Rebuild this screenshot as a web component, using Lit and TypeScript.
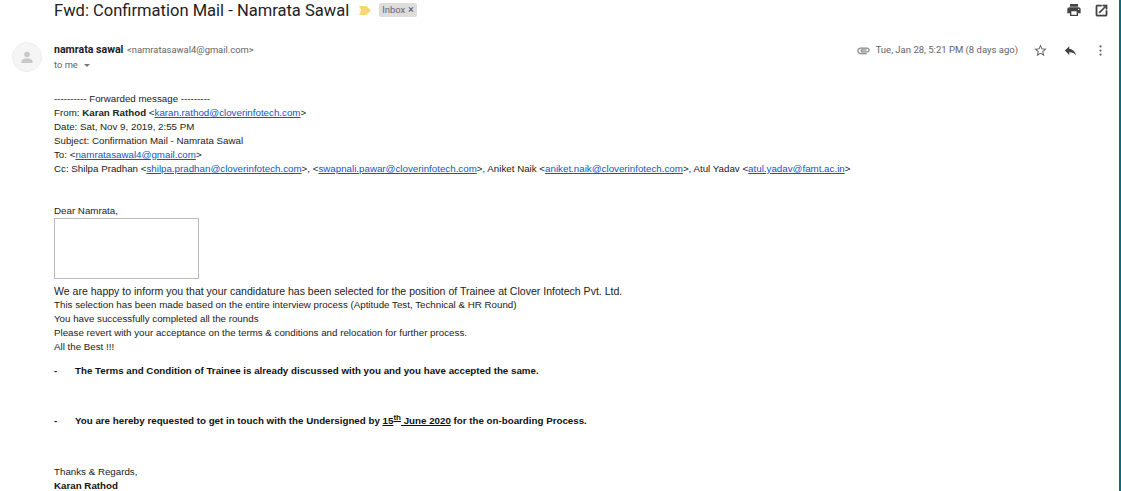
import { LitElement, html, css } from 'lit';
import { customElement } from 'lit/decorators.js';

@customElement('app-root')
export class AppRoot extends LitElement {
    static styles = css`
        :host {
            display: block;
            height: 491px;
            overflow: hidden;
            background: #fff;
            color: #222;
            font: 9.76px/14px 'Liberation Sans', Arial, sans-serif;
        }

        .page {
            height: 491px;
            box-sizing: border-box;
            border-right: 2px solid #0b6a7c;
            padding-right: 9px;
        }

        .subject {
            display: flex;
            align-items: center;
            height: 20px;
            padding-left: 54px;
        }

        .title {
            margin-top: 1px;
            font: 400 16.55px/20px Roboto, sans-serif;
            color: #222;
            white-space: nowrap;
        }

        .marker {
            margin-left: 10px;
        }

        .label {
            display: flex;
            align-items: center;
            gap: 3px;
            height: 14px;
            margin-left: 8px;
            padding: 0 3px;
            border-radius: 2px;
            background: #ddd;
            color: #666;
            font: 9.4px/14px Roboto, sans-serif;
        }

        .label span {
            font-size: 11px;
            color: #555;
        }

        .top-actions {
            display: flex;
            align-items: center;
            gap: 12px;
            margin-left: auto;
            margin-right: 1.5px;
        }

        .popout {
            stroke: #444;
            stroke-width: 0.8;
        }

        .sender-row {
            display: flex;
            margin-top: 22px;
            padding-left: 12px;
        }

        .avatar {
            flex: none;
            width: 30px;
            height: 30px;
            box-sizing: border-box;
            border: 1px solid #eee;
            border-radius: 50%;
            background: #f5f5f5;
        }

        .sender {
            margin-left: 12px;
        }

        .from {
            margin-top: 1px;
            font: 10.6px/14px Roboto, sans-serif;
            white-space: nowrap;
        }

        .from b {
            font-weight: 700;
            color: #202124;
        }

        .from span {
            color: #5f6368;
            font-size: 9.4px;
            margin-left: 1px;
        }

        .to {
            display: flex;
            align-items: center;
            gap: 5px;
            margin-top: 1px;
            color: #5f6368;
            font: 9.4px/14px Roboto, sans-serif;
        }

        .caret {
            width: 0;
            height: 0;
            border: 3px solid transparent;
            border-top: 3px solid #777;
            margin-top: 3px;
            margin-left: 1px;
        }

        .meta {
            display: flex;
            align-items: center;
            margin-left: auto;
            height: 14px;
            margin-top: 1px;
            color: #5f6368;
            font: 9.5px/14px Roboto, sans-serif;
        }

        .meta .time {
            margin-left: 5px;
        }

        .meta-actions {
            display: flex;
            align-items: center;
            gap: 15px;
            margin-left: 15px;
            margin-right: 2px;
        }

        .body {
            margin-top: 20px;
            padding-left: 54px;
            white-space: nowrap;
        }

        .body a {
            color: #1155cc;
            text-decoration: underline;
        }

        .greeting {
            margin-top: 29px;
            line-height: 12px;
        }

        .placeholder {
            width: 145px;
            height: 61px;
            box-sizing: border-box;
            border: 1px solid #bbb;
            margin-top: 1px;
            margin-bottom: 5px;
        }

        .lead {
            font-size: 10.54px;
        }

        .point {
            display: flex;
            font-weight: 700;
            color: #111;
        }

        .point .dash {
            width: 21px;
        }

        .point sup {
            font-size: 8px;
            line-height: 0;
        }

        .point-a {
            margin-top: 10px;
        }

        .point-b {
            margin-top: 36px;
        }

        .thanks {
            margin-top: 37px;
        }

        .name {
            font-weight: 700;
            color: #111;
        }
    `;

    render() {
        return html`
            <div class="page">
                <div class="subject">
                    <div class="title">Fwd: Confirmation Mail - Namrata Sawal</div>
                    <svg class="marker" width="12" height="9" viewBox="0 0 12 9">
                        <path d="M0 0h7.5L12 4.5 7.5 9H0l2.2-4.5z" fill="#f7d774" />
                    </svg>
                    <div class="label">Inbox <span>×</span></div>
                    <div class="top-actions">
                        <svg width="16" height="16" viewBox="0 0 24 24" fill="#444">
                            <path d="M19 8H5c-1.66 0-3 1.34-3 3v6h4v4h12v-4h4v-6c0-1.66-1.34-3-3-3zm-3 11H8v-5h8v5zm3-7c-.55 0-1-.45-1-1s.45-1 1-1 1 .45 1 1-.45 1-1 1zm-1-9H6v4h12V3z" />
                        </svg>
                        <svg class="popout" width="15" height="15" viewBox="0 0 24 24" fill="#444">
                            <path d="M19 19H5V5h7V3H5c-1.11 0-2 .9-2 2v14c0 1.1.89 2 2 2h14c1.1 0 2-.9 2-2v-7h-2v7zM14 3v2h3.59l-9.83 9.83 1.41 1.41L19 6.41V10h2V3h-7z" />
                        </svg>
                    </div>
                </div>

                <div class="sender-row">
                    <div class="avatar">
                        <svg width="28" height="28" viewBox="0 0 28 28" fill="#c8c8c8">
                            <circle cx="14" cy="11.5" r="2.8" />
                            <path d="M8.5 20v-1.6c0-2 3.6-3.1 5.5-3.1s5.5 1.1 5.5 3.1V20z" />
                        </svg>
                    </div>
                    <div class="sender">
                        <div class="from"><b>namrata sawal</b> <span>&lt;namratasawal4@gmail.com&gt;</span></div>
                        <div class="to">to me <i class="caret"></i></div>
                    </div>
                    <div class="meta">
                        <svg width="15" height="15" viewBox="0 0 24 24" fill="#888">
                            <path d="M2 12.5C2 9.46 4.46 7 7.5 7H18c2.21 0 4 1.79 4 4s-1.79 4-4 4H9.5C8.12 15 7 13.88 7 12.5S8.12 10 9.5 10H17v2H9.41c-.55 0-.55 1 0 1H18c1.1 0 2-.9 2-2s-.9-2-2-2H7.5C5.57 9 4 10.57 4 12.5S5.57 16 7.5 16H17v2H7.5C4.46 18 2 15.54 2 12.5z" />
                        </svg>
                        <span class="time">Tue, Jan 28, 5:21 PM (8 days ago)</span>
                        <div class="meta-actions">
                            <svg width="15" height="15" viewBox="0 0 24 24" fill="#5f6368">
                                <path d="M22 9.24l-7.19-.62L12 2 9.19 8.63 2 9.24l5.46 4.73L5.82 21 12 17.27 18.18 21l-1.63-7.03L22 9.24zM12 15.4l-3.76 2.27 1-4.28-3.32-2.88 4.38-.38L12 6.1l1.71 4.04 4.38.38-3.32 2.88 1 4.28L12 15.4z" />
                            </svg>
                            <svg width="15" height="15" viewBox="0 0 24 24" fill="#444">
                                <path d="M10 9V5l-7 7 7 7v-4.1c5 0 8.5 1.6 11 5.1-1-5-4-10-11-11z" />
                            </svg>
                            <svg width="15" height="15" viewBox="0 0 24 24" fill="#5f6368">
                                <circle cx="12" cy="5.5" r="1.8" />
                                <circle cx="12" cy="12" r="1.8" />
                                <circle cx="12" cy="18.5" r="1.8" />
                            </svg>
                        </div>
                    </div>
                </div>

                <div class="body">
                    <div>---------- Forwarded message ---------</div>
                    <div>From: <b>Karan Rathod</b> &lt;<a>karan.rathod@cloverinfotech.com</a>&gt;</div>
                    <div>Date: Sat, Nov 9, 2019, 2:55 PM</div>
                    <div>Subject: Confirmation Mail - Namrata Sawal</div>
                    <div>To: &lt;<a>namratasawal4@gmail.com</a>&gt;</div>
                    <div>
                        Cc: Shilpa Pradhan &lt;<a>shilpa.pradhan@cloverinfotech.com</a>&gt;,
                        &lt;<a>swapnali.pawar@cloverinfotech.com</a>&gt;, Aniket Naik
                        &lt;<a>aniket.naik@cloverinfotech.com</a>&gt;, Atul Yadav
                        &lt;<a>atul.yadav@famt.ac.in</a>&gt;
                    </div>

                    <div class="greeting">Dear Namrata,</div>
                    <div class="placeholder"></div>
                    <div class="lead">We are happy to inform you that your candidature has been selected for the position of Trainee at Clover Infotech Pvt. Ltd.</div>
                    <div>This selection has been made based on the entire interview process (Aptitude Test, Technical &amp; HR Round)</div>
                    <div>You have successfully completed all the rounds</div>
                    <div>Please revert with your acceptance on the terms &amp; conditions and relocation for further process.</div>
                    <div>All the Best !!!</div>

                    <div class="point point-a">
                        <span class="dash">-</span>
                        <span>The Terms and Condition of Trainee is already discussed with you and you have accepted the same.</span>
                    </div>
                    <div class="point point-b">
                        <span class="dash">-</span>
                        <span>You are hereby requested to get in touch with the Undersigned by <u>15</u><sup><u>th</u></sup><u> June 2020</u> for the on-boarding Process.</span>
                    </div>

                    <div class="thanks">Thanks &amp; Regards,</div>
                    <div class="name">Karan Rathod</div>
                </div>
            </div>
        `;
    }
}
